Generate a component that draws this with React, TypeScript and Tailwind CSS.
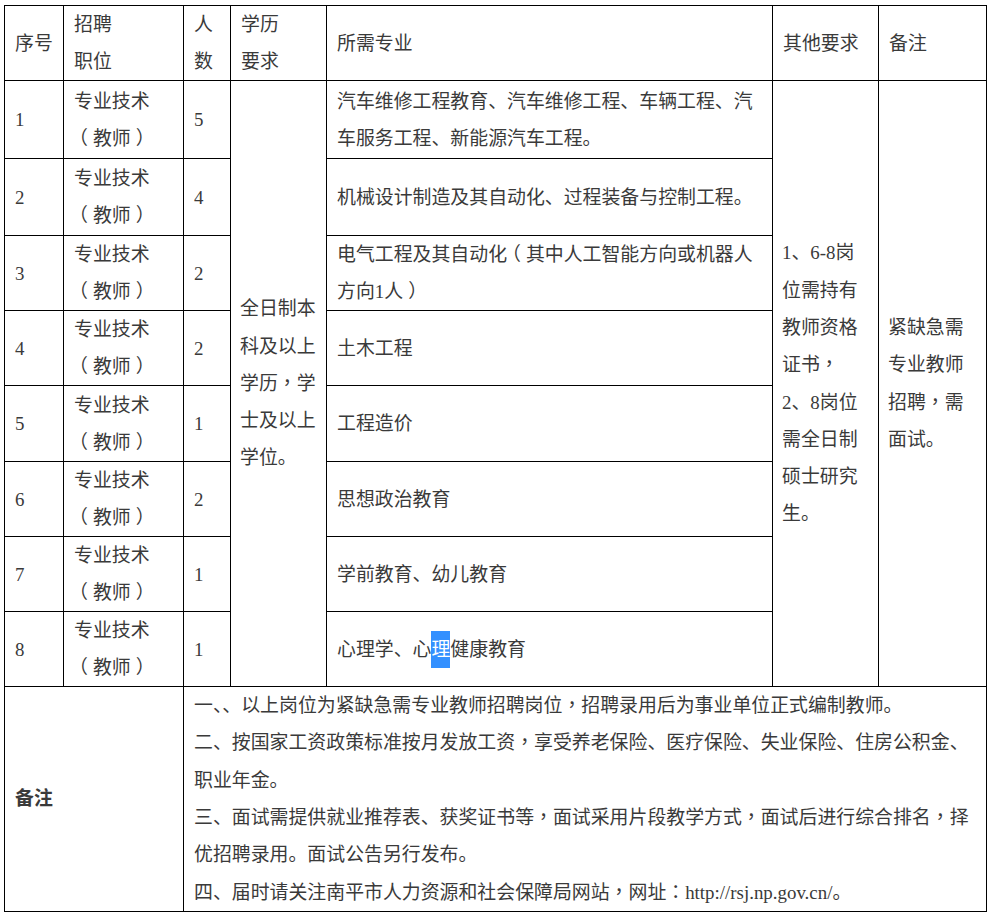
import React from "react"

const rows = [
  { no: "1", count: "5", major: "汽车维修工程教育、汽车维修工程、车辆工程、汽车服务工程、新能源汽车工程。", h: "h-[78px]" },
  { no: "2", count: "4", major: "机械设计制造及其自动化、过程装备与控制工程。", h: "h-[77px]" },
  { no: "3", count: "2", major: "电气工程及其自动化（其中人工智能方向或机器人方向1人）", h: "h-[75px]" },
  { no: "4", count: "2", major: "土木工程", h: "h-[75px]" },
  { no: "5", count: "1", major: "工程造价", h: "h-[76px]" },
  { no: "6", count: "2", major: "思想政治教育", h: "h-[75px]" },
  { no: "7", count: "1", major: "学前教育、幼儿教育", h: "h-[75px]" },
  { no: "8", count: "1", major: null, h: "h-[75px]" },
]

const base = "border border-black py-0 align-middle text-left"
const cell = base + " px-[10px] leading-[37px]"
const tall = base + " px-[10px] leading-[37.33px]"
const narrow = base + " px-[9px] leading-[37.33px] whitespace-nowrap"

// full-width ，：sit centred in the reference and so do the brackets
function T({ children }: { children: string }) {
  const parts = children.split(/([，：（）])/)
  return (
    <>
      {parts.map((p, i) => {
        if (p === "（")
          return (
            <span key={i} className="inline-block -translate-x-[5px] leading-none">
              {p}
            </span>
          )
        if (p === "）")
          return (
            <span key={i} className="inline-block translate-x-[5px] leading-none">
              {p}
            </span>
          )
        if (p === "，" || p === "：")
          return (
            <span key={i} className="leading-none" style={{ fontFamily: '"Noto Sans CJK TC", sans-serif' }}>
              {p}
            </span>
          )
        return <React.Fragment key={i}>{p}</React.Fragment>
      })}
    </>
  )
}

export default function App() {
  return (
    <div className="min-h-[917px] bg-white pl-[4px] pt-[5px]">
      <table
        className="w-[982px] table-fixed border-collapse text-[18.9px] text-[#3a3a3a]"
        style={{ fontFamily: '"Liberation Serif", "Noto Sans CJK SC", serif' }}
      >
        <colgroup>
          <col className="w-[59px]" />
          <col className="w-[120px]" />
          <col className="w-[47px]" />
          <col className="w-[96px]" />
          <col className="w-[446px]" />
          <col className="w-[106px]" />
          <col className="w-[108px]" />
        </colgroup>
        <thead>
          <tr className="h-[75px]">
            <th className={cell + " font-normal"}>序号</th>
            <th className={cell + " font-normal"}>
              招聘
              <br />
              职位
            </th>
            <th className={cell + " font-normal"}>
              人
              <br />
              数
            </th>
            <th className={cell + " font-normal"}>
              学历
              <br />
              要求
            </th>
            <th className={cell + " font-normal"}>所需专业</th>
            <th className={cell + " font-normal"}>其他要求</th>
            <th className={cell + " font-normal"}>备注</th>
          </tr>
        </thead>
        <tbody>
          {rows.map((r, i) => (
            <tr key={r.no} className={r.h}>
              <td className={cell}>{r.no}</td>
              <td className={cell}>
                专业技术
                <br />
                <T>（教师）</T>
              </td>
              <td className={cell}>{r.count}</td>
              {i === 0 && (
                <td className={narrow} rowSpan={8}>
                  全日制本
                  <br />
                  科及以上
                  <br />
                  <T>学历，学</T>
                  <br />
                  士及以上
                  <br />
                  学位。
                </td>
              )}
              <td className={cell}>
                {r.major ? (
                  <T>{r.major}</T>
                ) : (
                  <>
                    心理学、心
                    <span className="inline-block bg-[#3390ff] leading-[37px] text-white">理</span>
                    健康教育
                  </>
                )}
              </td>
              {i === 0 && (
                <>
                  <td className={narrow} rowSpan={8}>
                    1、6-8岗
                    <br />
                    位需持有
                    <br />
                    教师资格
                    <br />
                    <T>证书，</T>
                    <br />
                    2、8岗位
                    <br />
                    需全日制
                    <br />
                    硕士研究
                    <br />
                    生。
                  </td>
                  <td className={narrow} rowSpan={8}>
                    紧缺急需
                    <br />
                    专业教师
                    <br />
                    <T>招聘，需</T>
                    <br />
                    面试。
                  </td>
                </>
              )}
            </tr>
          ))}
          <tr className="h-[224px]">
            <td className={tall + " font-bold"} colSpan={2}>
              备注
            </td>
            <td className={tall} colSpan={5}>
              <p>
                <T>一、、以上岗位为紧缺急需专业教师招聘岗位，招聘录用后为事业单位正式编制教师。</T>
              </p>
              <p>
                <T>二、按国家工资政策标准按月发放工资，享受养老保险、医疗保险、失业保险、住房公积金、职业年金。</T>
              </p>
              <p>
                <T>三、面试需提供就业推荐表、获奖证书等，面试采用片段教学方式，面试后进行综合排名，择优招聘录用。面试公告另行发布。</T>
              </p>
              <p>
                <T>四、届时请关注南平市人力资源和社会保障局网站，网址：http://rsj.np.gov.cn/。</T>
              </p>
            </td>
          </tr>
        </tbody>
      </table>
    </div>
  )
}
